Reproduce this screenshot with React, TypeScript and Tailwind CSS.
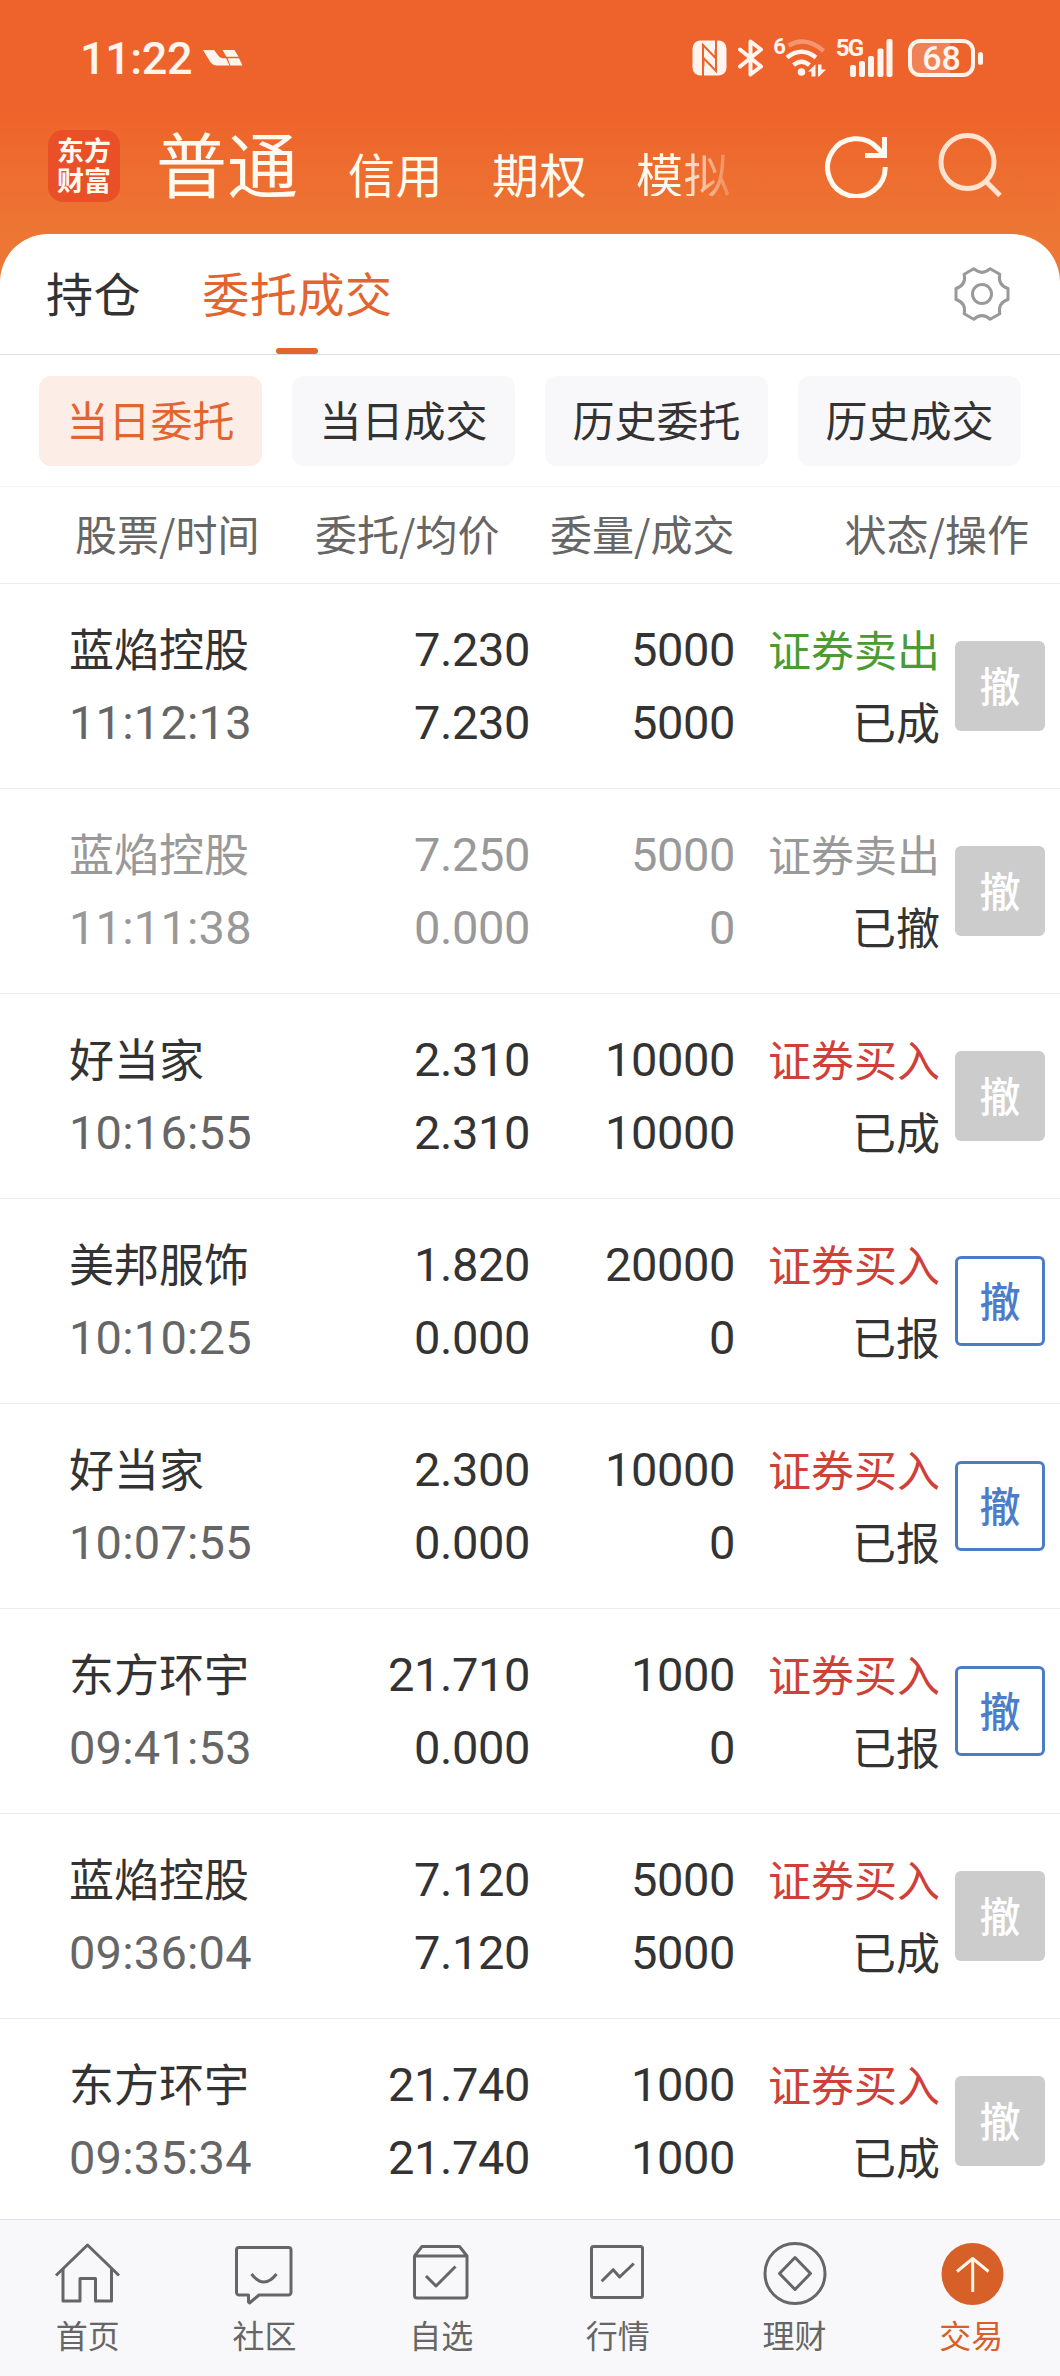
import React from 'react';
import clsx from 'clsx';

interface Order {
  name: string;
  time: string;
  price: string;
  avgPrice: string;
  amount: string;
  filled: string;
  side: 'buy' | 'sell';
  status: string;
}

const orders: Order[] = [
  { name: '蓝焰控股', time: '11:12:13', price: '7.230', avgPrice: '7.230', amount: '5000', filled: '5000', side: 'sell', status: '已成' },
  { name: '蓝焰控股', time: '11:11:38', price: '7.250', avgPrice: '0.000', amount: '5000', filled: '0', side: 'sell', status: '已撤' },
  { name: '好当家', time: '10:16:55', price: '2.310', avgPrice: '2.310', amount: '10000', filled: '10000', side: 'buy', status: '已成' },
  { name: '美邦服饰', time: '10:10:25', price: '1.820', avgPrice: '0.000', amount: '20000', filled: '0', side: 'buy', status: '已报' },
  { name: '好当家', time: '10:07:55', price: '2.300', avgPrice: '0.000', amount: '10000', filled: '0', side: 'buy', status: '已报' },
  { name: '东方环宇', time: '09:41:53', price: '21.710', avgPrice: '0.000', amount: '1000', filled: '0', side: 'buy', status: '已报' },
  { name: '蓝焰控股', time: '09:36:04', price: '7.120', avgPrice: '7.120', amount: '5000', filled: '5000', side: 'buy', status: '已成' },
  { name: '东方环宇', time: '09:35:34', price: '21.740', avgPrice: '21.740', amount: '1000', filled: '1000', side: 'buy', status: '已成' },
];

const filters = ['当日委托', '当日成交', '历史委托', '历史成交'];

const StatusBar = () => {
  return (
    <div className="flex h-[116px] items-center pl-[80px] pr-[77px] font-['Roboto',sans-serif] text-[#fff5ee]">
      <span className="text-[45px] leading-none font-medium tracking-[-0.4px]">11:22</span>
      <svg className="ml-[11px]" width="40" height="16" viewBox="0 0 40 16" fill="currentColor">
        <path d="M0 0h11l5 6.500q1.500 1.700 4 1.700h3l3.500 7.300H14q-4.500 0-7-4z" />
        <path d="M19.500 0h12l4 6.700h-12z" />
        <path d="M24.500 8.300h11.500l3.500 7.200h-12z" />
      </svg>
      <div className="ml-auto flex items-center">
        {/* NFC */}
        <svg width="35" height="36" viewBox="0 0 35 36">
          <rect x="0.500" y="0.500" width="34" height="35" rx="8" fill="currentColor" />
          <path d="M11 36V5L23.500 18V9.500M24 0v31L11.500 18v8.500" fill="none" stroke="#ee632b" strokeWidth="2" />
        </svg>
        {/* Bluetooth */}
        <svg className="ml-[11px]" width="26" height="38" viewBox="0 0 26 38" fill="none" stroke="currentColor" strokeWidth="4" strokeLinejoin="round" strokeLinecap="round">
          <path d="M2 10.500l21 17-10.500 8V2.500l10.500 8-21 17" />
        </svg>
        <span className="ml-[9px] self-start text-[22px] leading-[17px] font-bold">6</span>
        {/* Wi-Fi */}
        <svg className="-ml-px" width="42" height="40" viewBox="0 0 42 40" fill="none" stroke="currentColor" strokeWidth="4.500">
          <path d="M3.500 6.500Q21-3.500 38.500 12" opacity="0.35" transform="translate(0 1)" />
          <path d="M2 19.500q14.500-11.500 29 0" />
          <path d="M8.500 27q8-6.500 16 0" />
          <g fill="currentColor" stroke="none">
            <circle cx="16.500" cy="34" r="3.800" />
            <path d="M23 33.500l7.500-7v12h-4v-5zM33 26.500h3.500v5H41l-7 7h-1z" />
          </g>
        </svg>
        <span className="ml-[9px] self-start text-[24px] leading-[20px] font-bold tracking-[-2px]">5G</span>
        <svg className="-ml-[12px]" width="43" height="38" viewBox="0 0 43 38" fill="currentColor">
          <rect x="0" y="26" width="6" height="12" rx="2" />
          <rect x="9" y="22" width="6" height="16" rx="2" />
          <rect x="18" y="17" width="6" height="21" rx="2" />
          <rect x="27.500" y="9.500" width="6" height="28.500" rx="2" />
          <rect x="36.500" y="0" width="6" height="38" rx="2" />
        </svg>
        <div className="ml-[15px] flex h-[38px] w-[67px] items-center justify-center rounded-[12px] border-[4px] border-current bg-linear-to-r from-white/20 from-65% to-transparent to-65% text-[34px] leading-none font-medium">
          68
        </div>
        <div className="ml-[3px] h-[13px] w-[5px] rounded-full bg-current" />
      </div>
    </div>
  );
};

const Header = () => {
  return (
    <div className="flex h-[100px] items-center pl-[48px] text-[47px] leading-none text-[#fffaf0]">
      <div className="w-[72px] rounded-[15px] bg-[#ea5028] px-[9px] pt-[5px] pb-[7px] text-center text-[27px] leading-[30px] font-bold">
        东方财富
      </div>
      <span className="mb-[10px] ml-[36px] text-[71px]">普通</span>
      <span className="mt-[13px] ml-[50px] tracking-[0.5px]">信用</span>
      <span className="mt-[13px] ml-[49px] tracking-[0.5px]">期权</span>
      <span className="mt-[13px] ml-[49px] bg-linear-to-r from-[#fffaf0] from-45% to-white/15 bg-clip-text tracking-[0.5px] text-transparent">模拟</span>
      <svg className="ml-[94px]" width="64" height="64" viewBox="0 0 64 64" fill="none" stroke="currentColor" strokeWidth="5">
        <path d="M60.200 33A28.800 28.800 0 1 1 53 14.500l7 7" />
        <path d="M40 21.500h19.500V3" />
      </svg>
      <svg className="ml-[49px]" width="66" height="66" viewBox="0 0 66 66" fill="none" stroke="#ffe3cf" strokeWidth="5">
        <circle cx="29.500" cy="29" r="26.500" />
        <path d="M48 48.500l14 14" />
      </svg>
    </div>
  );
};

const Tabs = () => {
  return (
    <div className="flex h-[121px] border-b border-[#dddddd] pr-[50px] pl-[46px] text-[47px] tracking-[0.6px] text-[#333333]">
      <span className="flex items-center pb-[4px]">持仓</span>
      <div className="relative ml-[61px] flex items-center pb-[4px] text-[#e2652f]">
        委托成交
        <div className="absolute bottom-0 left-1/2 h-[6px] w-[42px] -translate-x-1/2 rounded-full bg-[#e2652f]" />
      </div>
      <svg className="ml-auto self-center" width="56" height="56" viewBox="-28 -28 56 56" fill="none" stroke="#999999" strokeWidth="3" strokeLinejoin="round">
        <path d="M26-5.500V5.500Q15.600 9 17.800 19.800L8.200 25.300Q0 18-8.200 25.300L-17.800 19.800Q-15.600 9-26 5.500V-5.500Q-15.600-9-17.800-19.800L-8.200-25.300Q0-18 8.200-25.300L17.800-19.800Q15.600-9 26-5.500z" />
        <circle r="9.500" />
      </svg>
    </div>
  );
};

const OrderRow: React.FC<{ order: Order }> = ({ order }) => {
  const cancelled = order.status === '已撤';
  const pending = order.status === '已报';

  return (
    <div
      className={clsx(
        'grid h-[205px] shrink-0 grid-cols-[230px_230px_205px_204px_106px] items-center border-b border-[#ececec] pl-[70px] text-[47px] leading-[73px] tracking-[-0.4px]',
        cancelled ? 'text-[#999999]' : 'text-[#333333]',
      )}
    >
      <div>
        <div className="-mt-[2px] mb-[2px] -ml-px text-[45px] tracking-normal">{order.name}</div>
        <div className={clsx("-ml-px font-['Roboto',sans-serif] tracking-[0.2px]", !cancelled && 'text-[#666666]')}>{order.time}</div>
      </div>
      <div className="text-right font-['Roboto',sans-serif]">
        <div>{order.price}</div>
        <div>{order.avgPrice}</div>
      </div>
      <div className="text-right font-['Roboto',sans-serif]">
        <div>{order.amount}</div>
        <div>{order.filled}</div>
      </div>
      <div className="-mr-px pb-[3px] text-right text-[43px] tracking-normal">
        <div className={clsx(!cancelled && (order.side === 'buy' ? 'text-[#cf4038]' : 'text-[#4b9b35]'))}>
          {order.side === 'buy' ? '证券买入' : '证券卖出'}
        </div>
        <div className="text-[44px] text-[#333333]">{order.status}</div>
      </div>
      <button
        className={clsx(
          'flex size-[90px] items-center justify-center justify-self-end rounded-[6px] pb-[4px] text-[41px] leading-none font-medium tracking-normal',
          pending ? 'border-[3px] border-[#4c7dc4] text-[#4c7dc8]' : 'bg-[#cccccc] text-white',
        )}
      >
        撤
      </button>
    </div>
  );
};

const navItems = [
  {
    label: '首页',
    icon: (
      <>
        <path d="M3 37.500L34.500 7 66 37.500" />
        <path d="M10 31v32h17V40.500h15.500V63h16V31" />
      </>
    ),
  },
  {
    label: '社区',
    icon: (
      <>
        <path d="M9 9.500h49.500a2.500 2.500 0 0 1 2.500 2.500v42.500a2.500 2.500 0 0 1-2.500 2.500H29l-9.500 8-1-1v-7H9a2.500 2.500 0 0 1-2.500-2.500V12A2.500 2.500 0 0 1 9 9.500z" />
        <path d="M21.500 36q12.500 16 25 0" />
      </>
    ),
  },
  {
    label: '自选',
    icon: (
      <>
        <path d="M7.500 18l7.500-9.500h37.500L60 18v39.500a2.500 2.500 0 0 1-2.500 2.500H10a2.500 2.500 0 0 1-2.500-2.500V18H60" />
        <path d="M19 38l10 10 19.500-19.500" />
      </>
    ),
  },
  {
    label: '行情',
    icon: (
      <>
        <rect x="8.500" y="8.500" width="51" height="51" rx="2" />
        <path d="M18.700 43.300l11.500-11.600 6.400 7.300 14.200-13.500" />
      </>
    ),
  },
  {
    label: '理财',
    icon: (
      <>
        <circle cx="35" cy="35.500" r="30" />
        <path d="M35 19.500l15.500 16L35 51.500 19.500 35.500z" />
      </>
    ),
  },
  {
    label: '交易',
    active: true,
    icon: (
      <>
        <circle cx="35.500" cy="36" r="31" fill="currentColor" stroke="none" />
        <path d="M20 33.500L35.700 20.500l15.800 13M35.700 20.500V54" stroke="#fff5e8" />
      </>
    ),
  },
];

const BottomNav = () => {
  return (
    <div className="grid h-[157px] shrink-0 grid-cols-6 border-t border-[#e3e3e3] bg-[#f8f8fa] pt-[18px]">
      {navItems.map((item) => (
        <div key={item.label} className={clsx('flex flex-col items-center', item.active ? 'text-[#d75f28]' : 'text-[#666666]')}>
          <svg width="70" height="70" viewBox="0 0 70 70" fill="none" stroke="currentColor" strokeWidth="3" strokeLinejoin="round">
            {item.icon}
          </svg>
          <span className="mt-[6px] mr-px text-[32px] leading-[40px]">{item.label}</span>
        </div>
      ))}
    </div>
  );
};

export default function App() {
  return (
    <div className="flex h-[2376px] w-[1060px] flex-col overflow-hidden bg-white font-['Noto_Sans_CJK_SC',sans-serif]">
      <div className="h-[290px] shrink-0 bg-linear-to-b from-[#ee632b] from-38% to-[#ed7634] to-80%">
        <StatusBar />
        <Header />
      </div>
      <div className="-mt-[56px] flex min-h-0 flex-1 flex-col overflow-hidden rounded-t-[48px] bg-white">
        <Tabs />
        <div className="flex h-[132px] items-center gap-[30px] border-b border-[#f5f5f5] pl-[39px] text-[42px] leading-none">
          {filters.map((filter, index) => (
            <div
              key={filter}
              className={clsx(
                'flex h-[90px] w-[223px] items-center justify-center rounded-[12px] pb-[3px]',
                index === 0 ? 'bg-[#fcede6] text-[#e2652f]' : 'bg-[#f8f8fa] text-[#333333]',
              )}
            >
              {filter}
            </div>
          ))}
        </div>
        <div className="grid h-[97px] grid-cols-[240px_235px_250px_229px] items-center border-b border-[#ececec] pb-[4px] pl-[75px] text-[42px] leading-none whitespace-nowrap text-[#666666]">
          <span>股票/时间</span>
          <span>委托/均价</span>
          <span>委量/成交</span>
          <span className="text-right">状态/操作</span>
        </div>
        <div className="flex min-h-0 flex-1 flex-col overflow-hidden">
          {orders.map((order) => (
            <OrderRow key={order.time} order={order} />
          ))}
        </div>
      </div>
      <BottomNav />
    </div>
  );
}
